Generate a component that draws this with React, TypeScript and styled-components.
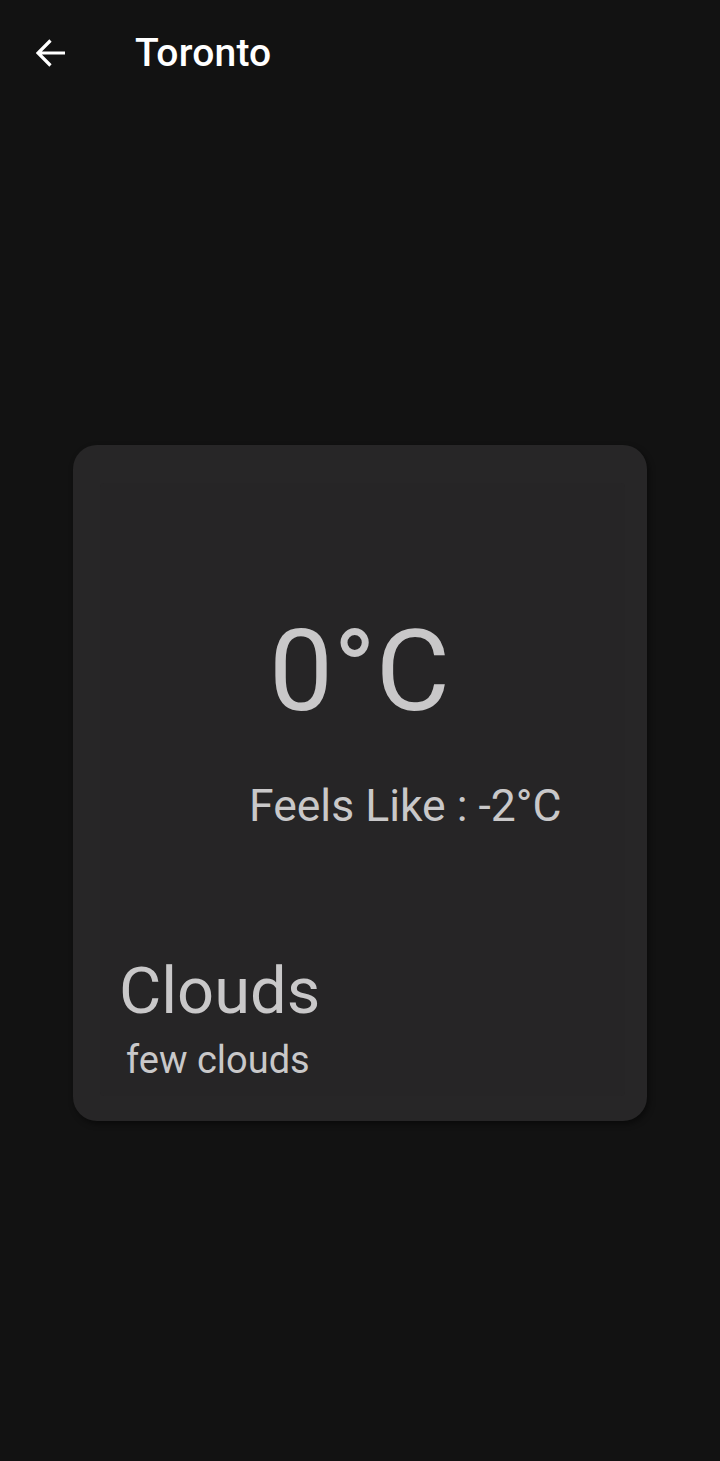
import React from "react";
import styled, { createGlobalStyle } from "styled-components";

const Global = createGlobalStyle`
  html, body { margin: 0; padding: 0; background: #121212; }
  body { font-family: Roboto, "Noto Sans", sans-serif; }
  * { box-sizing: border-box; }
`;

const Page = styled.div`
  min-height: 1461px;
  display: flex;
  flex-direction: column;
  background: #121212;
`;

const Header = styled.header`
  height: 105px;
  display: flex;
  align-items: center;
  padding-left: 36px;
  gap: 69px;
`;

const BackButton = styled.button`
  border: 0;
  background: transparent;
  padding: 0;
  width: 30px;
  height: 30px;
  display: flex;
  align-items: center;
  justify-content: center;
  color: #ffffff;
`;

const Title = styled.h1`
  margin: 2px 0 0;
  font-family: Roboto, sans-serif;
  font-weight: 500;
  font-size: 39px;
  line-height: 1;
  color: #ffffff;
  letter-spacing: 0.2px;
`;

const Main = styled.main`
  flex: 1;
  display: flex;
  align-items: center;
  justify-content: center;
`;

const Card = styled.section`
  width: 574px;
  height: 676px;
  border-radius: 24px;
  background: #272627;
  box-shadow: 2px 3px 6px rgba(0, 0, 0, 0.45);
  padding: 38px 22px 25px 27px;
  display: flex;
`;

const Inner = styled.div`
  flex: 1;
  display: flex;
  flex-direction: column;
  background: #262526;
  border-radius: 4px;
  padding-top: 131px;
`;

const Text = styled.div<{ $size: number; $ml?: number; $mt?: number; $center?: boolean }>`
  font-family: Roboto, sans-serif;
  font-weight: 400;
  color: #c9c8c9;
  font-size: ${(p) => p.$size}px;
  line-height: 1;
  margin-left: ${(p) => p.$ml ?? 0}px;
  margin-top: ${(p) => p.$mt ?? 0}px;
  text-align: ${(p) => (p.$center ? "center" : "left")};
  white-space: nowrap;
`;

export default function App() {
  return (
    <>
      <Global />
      <Page>
        <Header>
          <BackButton aria-label="Back">
            <svg width="30" height="28" viewBox="0 0 30 28" fill="none">
              <path
                d="M29 14H2M14.5 1.5L2 14l12.5 12.5"
                stroke="#ffffff"
                strokeWidth="3.2"
                strokeLinecap="butt"
                strokeLinejoin="miter"
              />
            </svg>
          </BackButton>
          <Title>Toronto</Title>
        </Header>
        <Main>
          <Card>
            <Inner>
              <Text $size={114} $center style={{ paddingRight: 6 }}>
                0°C
              </Text>
              <Text $size={44.5} $ml={149} $mt={56}>
                Feels Like : -2°C
              </Text>
              <Text $size={65} $ml={19} $mt={130}>
                Clouds
              </Text>
              <Text $size={38} $ml={26} $mt={17}>
                few clouds
              </Text>
            </Inner>
          </Card>
        </Main>
      </Page>
    </>
  );
}
